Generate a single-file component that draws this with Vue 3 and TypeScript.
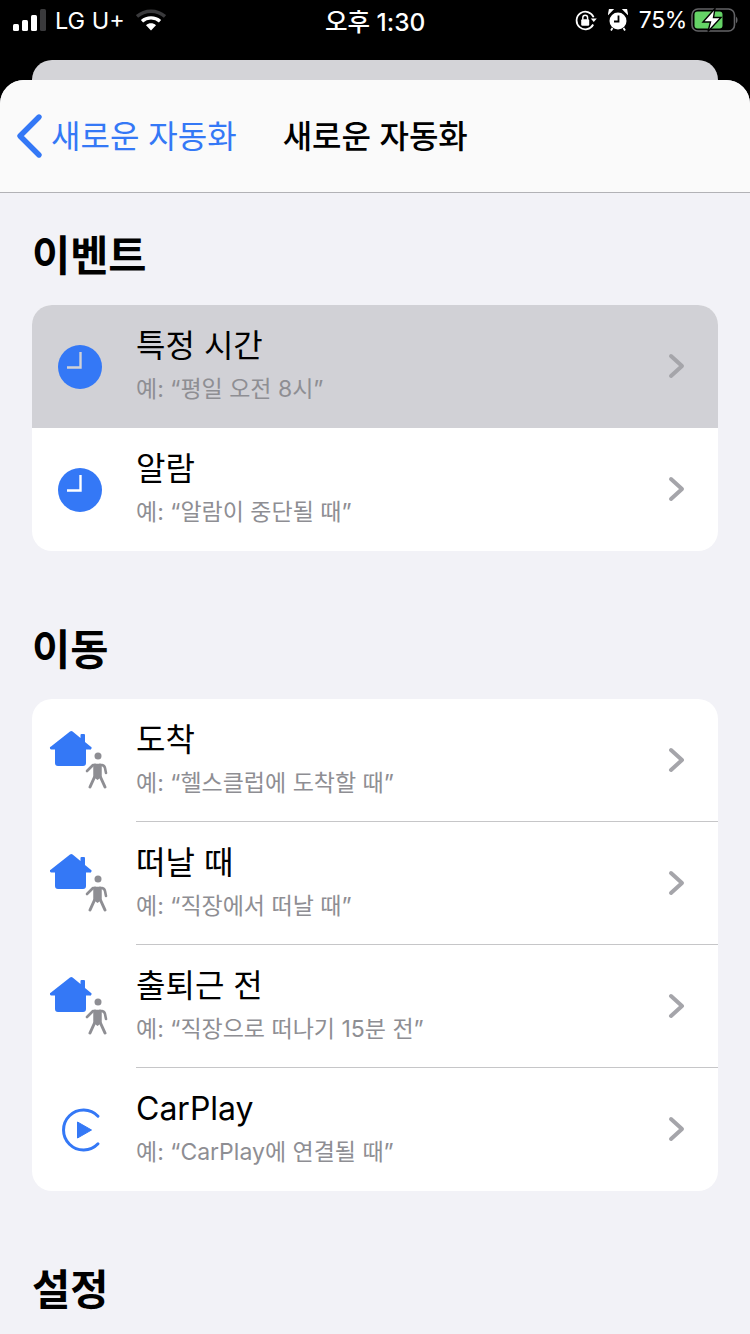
<template>
  <div class="screen">
    <div class="status-bar">
      <div class="status-left">
        <svg class="signal" width="34" height="22" viewBox="0 0 34 22">
          <rect x="0" y="15" width="6" height="7" rx="1.5" fill="#fff" />
          <rect x="9" y="11" width="6" height="11" rx="1.5" fill="#fff" />
          <rect x="18" y="6" width="6" height="16" rx="1.5" fill="#fff" />
          <rect x="27" y="0" width="6" height="22" rx="1.5" fill="#3a3a3c" />
        </svg>
        <span class="carrier">LG U+</span>
        <svg class="wifi" width="30" height="22" viewBox="0 0 30 22">
          <path d="M1 7.500C9 0.500 21 0.500 29 7.500" fill="none" stroke="#3a3a3c" stroke-width="3.400" />
          <path d="M6 12.200C11 7.800 19 7.800 24 12.200" fill="none" stroke="#fff" stroke-width="3.400" />
          <path d="M10 16.200C13 13.600 17 13.600 20 16.200L15 21.500Z" fill="#fff" />
        </svg>
      </div>
      <div class="status-time">오후 1:30</div>
      <div class="status-right">
        <svg width="24" height="21" viewBox="0 0 30 26">
          <path d="M24.500 9A11 11 0 1 0 24 18" fill="none" stroke="#fff" stroke-width="2.200" />
          <path d="M21 10.500H28.500L24.700 15Z" fill="#fff" />
          <rect x="9" y="11.500" width="10" height="8" rx="1.500" fill="#fff" />
          <path d="M11 12V9.500a3 3 0 0 1 6 0V12" fill="none" stroke="#fff" stroke-width="1.800" />
        </svg>
        <svg class="alarm" width="20" height="22" viewBox="0 0 20 22">
          <circle cx="10" cy="12" r="8.500" fill="#fff" />
          <path d="M10.500 6.500V12.500H6" fill="none" stroke="#000" stroke-width="1.800" />
          <path d="M0.800 4.500L4.500 0.800L1.500 0.800ZM19.200 4.500L15.500 0.800L18.500 0.800Z" fill="#fff" stroke="#fff" stroke-width="1.400" />
          <path d="M4.500 19L3 21.500M15.500 19L17 21.500" stroke="#fff" stroke-width="1.800" />
        </svg>
        <span class="percent">75%</span>
        <svg class="battery" width="47" height="24" viewBox="0 0 47 24">
          <rect x="1" y="1" width="42.500" height="22" rx="6" fill="none" stroke="#636366" stroke-width="1.600" />
          <rect x="3.500" y="3.500" width="28" height="17" rx="3" fill="#65d366" />
          <path d="M45 8.500a3 4 0 0 1 0 7Z" fill="#636366" />
          <path d="M24 0.500L12 14H19.500L17 23.500L30 9.500H22.500Z" fill="#fff" stroke="#000" stroke-width="1.400" />
        </svg>
      </div>
    </div>

    <div class="back-card"></div>

    <div class="sheet">
      <header class="nav">
        <div class="nav-back">
          <svg width="28" height="46" viewBox="0 0 28 46">
            <path d="M24 4L5 23L24 42" fill="none" stroke="#3478f6" stroke-width="5.400" stroke-linecap="round" stroke-linejoin="round" />
          </svg>
          <span>새로운 자동화</span>
        </div>
        <div class="nav-title">새로운 자동화</div>
      </header>

      <section v-for="section in sections" :key="section.title" class="section">
        <h2 class="section-title">{{ section.title }}</h2>
        <div v-if="section.rows.length" class="card">
          <div
            v-for="row in section.rows"
            :key="row.title"
            class="row"
            :class="{ selected: row.selected }"
          >
            <div class="row-icon">
              <svg v-if="row.icon === 'clock'" width="44" height="44" viewBox="0 0 44 44">
                <circle cx="22" cy="22" r="22" fill="#3478f6" />
                <path d="M22.500 7V22.500H9" fill="none" :stroke="row.selected ? '#d1d1d6' : '#fff'" stroke-width="2.400" />
              </svg>
              <svg v-else-if="row.icon === 'home'" class="home-icon" width="64" height="60" viewBox="0 0 64 60">
                <path
                  d="M21 1.500a2 2 0 0 1 2.600 0L31.500 8V5a1 1 0 0 1 1-1H35a1 1 0 0 1 1 1V12L41.500 16.500a1.500 1.500 0 0 1-1 3H37V33a3 3 0 0 1-3 3H9a3 3 0 0 1-3-3V19.500H3a1.500 1.500 0 0 1-1-3Z"
                  fill="#3478f6"
                />
                <circle cx="49" cy="26" r="3.500" fill="#8e8e93" />
                <path d="M38 41L44 35H53Q55.500 35.500 56 38L57 43" fill="none" stroke="#8e8e93" stroke-width="2.600" stroke-linecap="round" stroke-linejoin="round" />
                <path d="M46 35V46L41 57M51 35V46L56 57" fill="none" stroke="#8e8e93" stroke-width="3" stroke-linecap="round" stroke-linejoin="round" />
                <path d="M44.500 34H52.500V47L48.500 50L44.500 47Z" fill="#8e8e93" />
              </svg>
              <svg v-else width="44" height="44" viewBox="0 0 44 44">
                <path d="M40 8.200A20 20 0 1 0 40 35.800" fill="none" stroke="#3478f6" stroke-width="3" stroke-linecap="round" />
                <path d="M19.500 14L33.500 22L19.500 30Z" fill="#3478f6" stroke="#3478f6" stroke-width="1" stroke-linejoin="round" />
              </svg>
            </div>
            <div class="row-body">
              <div class="row-text">
                <div class="row-title">{{ row.title }}</div>
                <div class="row-sub">{{ row.sub }}</div>
              </div>
              <svg class="chevron" width="18" height="26" viewBox="0 0 18 26">
                <path d="M3 3L14 13L3 23" fill="none" stroke="#a5a5aa" stroke-width="4" stroke-linecap="round" stroke-linejoin="round" />
              </svg>
            </div>
          </div>
        </div>
      </section>
    </div>
  </div>
</template>

<script setup lang="ts">
interface Row {
  title: string
  sub: string
  icon: 'clock' | 'home' | 'carplay'
  selected?: boolean
}

const sections: { title: string; rows: Row[] }[] = [
  {
    title: '이벤트',
    rows: [
      { title: '특정 시간', sub: '예: “평일 오전 8시”', icon: 'clock', selected: true },
      { title: '알람', sub: '예: “알람이 중단될 때”', icon: 'clock' }
    ]
  },
  {
    title: '이동',
    rows: [
      { title: '도착', sub: '예: “헬스클럽에 도착할 때”', icon: 'home' },
      { title: '떠날 때', sub: '예: “직장에서 떠날 때”', icon: 'home' },
      { title: '출퇴근 전', sub: '예: “직장으로 떠나기 15분 전”', icon: 'home' },
      { title: 'CarPlay', sub: '예: “CarPlay에 연결될 때”', icon: 'carplay' }
    ]
  },
  { title: '설정', rows: [] }
]
</script>

<style>
html,
body {
  background: #000;
}
</style>

<style scoped>
.screen {
  width: 750px;
  height: 1334px;
  overflow: hidden;
  background: #000;
  font-family: Inter, "Noto Sans CJK KR", sans-serif;
}

.status-bar {
  height: 40px;
  padding: 0 12px 0 13px;
  margin-bottom: 20px;
  display: grid;
  grid-template-columns: 312px auto 1fr;
  align-items: center;
  color: #fff;
  font-size: 23.5px;
}

.status-left {
  display: flex;
  align-items: center;
  gap: 8px;
}

.carrier {
  font-weight: 400;
  margin-right: 3px;
}

.status-time {
  font-weight: 500;
  font-size: 24.5px;
}

.status-right {
  display: flex;
  align-items: center;
  justify-content: flex-end;
  gap: 10px;
}

.percent {
  font-size: 23px;
  letter-spacing: -0.4px;
  margin-left: 1px;
  margin-right: -6px;
}

.back-card {
  height: 20px;
  margin: 0 32px;
  background: #d4d4d8;
  border-radius: 22px 22px 0 0;
}

.sheet {
  height: 1254px;
  overflow: hidden;
  background: #f2f2f7;
  border-radius: 24px 24px 0 0;
}

.nav {
  height: 113px;
  box-sizing: border-box;
  padding-left: 15px;
  display: flex;
  align-items: center;
  gap: 46px;
  background: #fafafa;
  border-bottom: 1px solid #b2b2b6;
  font-size: 32px;
}

.nav-back {
  display: flex;
  align-items: center;
  gap: 8px;
  color: #3478f6;
}

.nav-back span {
  font-weight: 400;
  padding-bottom: 5px;
}

.nav-title {
  font-weight: 500;
  color: #000;
  padding-bottom: 5px;
}

.section {
  padding: 0 32px;
}

.section-title {
  margin: 0;
  height: 112px;
  box-sizing: border-box;
  padding-top: 35px;
  font-size: 41.5px;
  line-height: 56px;
  font-weight: 700;
  color: #000;
}

.section + .section .section-title {
  height: 148px;
  padding-top: 71px;
}

.card {
  background: #fff;
  border-radius: 20px;
  overflow: hidden;
}

.row {
  height: 123px;
  display: flex;
}

.row.selected {
  background: #d1d1d6;
}

.row-icon {
  width: 104px;
  flex-shrink: 0;
  display: flex;
  align-items: center;
  justify-content: center;
  padding-right: 8px;
  box-sizing: border-box;
}

.home-icon {
  margin-left: 2px;
  margin-bottom: 2px;
}

.row-body {
  flex: 1;
  display: flex;
  align-items: center;
  justify-content: space-between;
  padding-right: 32px;
}

.row + .row .row-body {
  box-shadow: 0 -1px 0 #c6c6c8;
}

.row.selected + .row .row-body {
  box-shadow: none;
}

.row-text {
  padding-bottom: 5px;
}

.row-title {
  font-size: 32px;
  line-height: 44px;
  color: #000;
}

.row-sub {
  margin-top: 5px;
  font-size: 23px;
  line-height: 32px;
  color: #8e8e93;
}

.chevron {
  margin-bottom: 2px;
}
</style>
